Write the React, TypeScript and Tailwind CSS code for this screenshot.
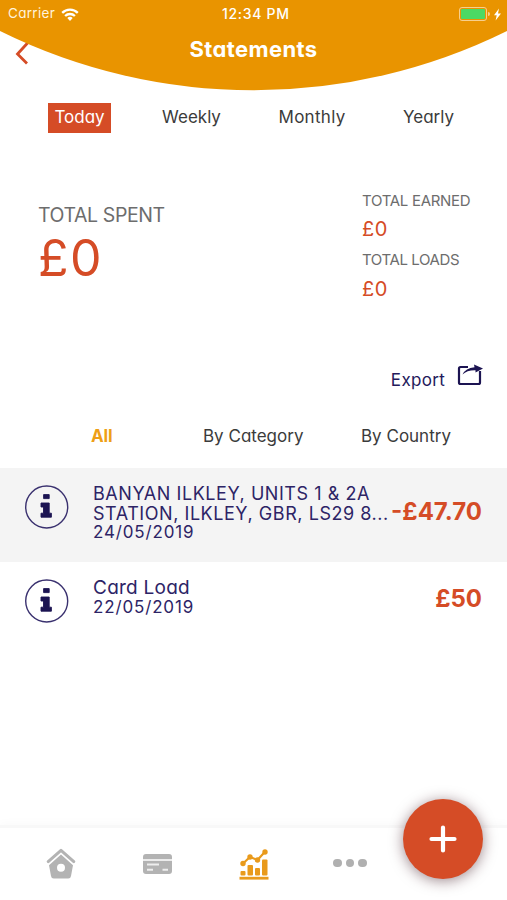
import React, { useState } from "react";
import clsx from "clsx";

const periods = [
  { label: "Today", text: "w-[63px]" },
  { label: "Weekly", text: "w-[71px]" },
  { label: "Monthly", text: "w-[80px] tracking-[0.3px]" },
  { label: "Yearly", text: "w-[63px]" },
];

const transactions = [
  {
    title: ["BANYAN ILKLEY, UNITS 1 & 2A", "STATION, ILKLEY, GBR, LS29 8..."],
    date: "24/05/2019",
    amount: "-£47.70",
  },
  { title: ["Card Load"], date: "22/05/2019", amount: "£50" },
];

function StatusBar() {
  return (
    <div className="relative flex h-[28px] items-center justify-between pl-[8px] pr-[5px] text-[13px] leading-none text-white">
      <div className="flex items-center gap-[6px]">
        <span className="w-[47px] text-[13.5px] tracking-[0.3px] text-[#fff3dc]">Carrier</span>
        <svg width="18" height="13" viewBox="0 0 18 13" fill="none" stroke="#fff" strokeWidth="2.3">
          <path d="M1.2 4.9a11 11 0 0 1 15.6 0" />
          <path d="M4.1 8a7 7 0 0 1 9.8 0" />
          <path d="M9 13 6.3 10.1a3.9 3.9 0 0 1 5.4 0z" fill="#fff" stroke="none" />
        </svg>
      </div>
      <span className="absolute left-[222px] text-[14px] font-medium tracking-[0.7px]">12:34 PM</span>
      <div className="flex items-center">
        <div className="h-[14px] w-[28px] rounded-[3px] border border-[#f7cf8e] p-px">
          <div className="h-full rounded-[1px] bg-[#4cd964]" />
        </div>
        <div className="ml-px h-[4px] w-[2px] rounded-r bg-[#f7cf8e]" />
        <svg className="ml-[3px]" width="9" height="13" viewBox="0 0 9 13" fill="#fff">
          <path d="M6 0.5 1 7.3h2.7L2.6 12.5 8 5.5H5z" />
        </svg>
      </div>
    </div>
  );
}

function Header() {
  return (
    <header className="relative h-[90px]">
      <svg className="absolute inset-0" width="507" height="91" viewBox="0 0 507 91">
        <path d="M28.5 42 17.5 54l9.5 9.5" fill="none" stroke="#d54c26" strokeWidth="2.8" />
        <path d="M0 0h507v31A572 572 0 0 1 0 31z" fill="#e99400" />
      </svg>
      <StatusBar />
      <h1 className="relative mt-[7px] text-center text-[22px] font-bold leading-[28px] tracking-[0.4px] text-white">
        Statements
      </h1>
    </header>
  );
}

function InfoIcon() {
  return (
    <svg className="shrink-0" width="44" height="44" viewBox="0 0 44 44">
      <circle cx="21.7" cy="22" r="21" fill="none" stroke="#3a316f" strokeWidth="1.4" />
      <path
        d="M18.6 9.6h5.6v4h-5.6zM16 18h8.2v10.2h2.2v4H16v-4h2.5v-6.2H16z"
        fill="#1c1452"
        stroke="#1c1452"
        strokeWidth="0.9"
        strokeLinejoin="round"
      />
    </svg>
  );
}

function TabBar() {
  return (
    <nav className="relative mt-auto flex h-[75px] items-center border-t-[3px] border-[#f8f8f8] bg-white shadow-[0_-3px_8px_rgba(0,0,0,0.02)]">
      <svg className="ml-[46px]" width="30" height="32" viewBox="0 0 30 32" fill="#b3b3b3">
        <path d="M2.2 13.6 15 2.3l12.8 11.3" fill="none" stroke="#b3b3b3" strokeWidth="3" strokeLinecap="round" strokeLinejoin="round" />
        <path
          fillRule="evenodd"
          d="M15 6.6 27 17.2l-2 10.8q-.4 2.5-2.7 2.5H7.7q-2.3 0-2.7-2.5L3 17.2zM15 15.7a4 4 0 1 0 0 8 4 4 0 0 0 0-8z"
        />
      </svg>
      <svg className="ml-[67px]" width="29" height="20" viewBox="0 0 29 20">
        <path d="M3 0h23q3 0 3 3v2.2H0V3q0-3 3-3zM0 6.8h29V17q0 3-3 3H3q-3 0-3-3z" fill="#b3b3b3" />
        <path d="M4 10.5h12M4 15.8h6M19.5 15.8H25" stroke="#eee" strokeWidth="2" />
      </svg>
      <svg className="ml-[67px]" width="30" height="31" viewBox="0 0 30 31" fill="#e99a1b">
        <path d="M4 14.5 11 8l7.5 3L26 2.8" fill="none" stroke="#e99a1b" strokeWidth="2.2" />
        <circle cx="4" cy="14.5" r="2.7" />
        <circle cx="11" cy="8" r="2.7" />
        <circle cx="18.5" cy="11" r="2.7" />
        <circle cx="26" cy="3" r="2.7" />
        <rect x="1.5" y="22" width="5" height="4.5" rx="1" />
        <rect x="8.5" y="16" width="5.5" height="10.5" rx="1" />
        <rect x="16" y="19" width="5" height="7.5" rx="1" />
        <rect x="23" y="10.5" width="5.5" height="16" rx="1" />
        <rect x="0.5" y="27.8" width="29" height="2.8" />
      </svg>
      <div className="ml-[64px] mt-[-2px] flex gap-[4px]">
        <span className="size-[8.5px] rounded-full bg-[#b0b0b0]" />
        <span className="size-[8.5px] rounded-full bg-[#b0b0b0]" />
        <span className="size-[8.5px] rounded-full bg-[#b0b0b0]" />
      </div>
      <button className="absolute right-[24px] top-[-29px] flex size-[80px] items-center justify-center rounded-full bg-[#d54c26] shadow-[0_2px_14px_rgba(60,20,30,0.5)]">
        <svg width="30" height="30" viewBox="0 0 30 30" stroke="#fff" strokeWidth="4.2" strokeLinecap="round">
          <path d="M15 3.5v23M3.5 15h23" />
        </svg>
      </button>
    </nav>
  );
}

export default function App() {
  const [period, setPeriod] = useState("Today");

  return (
    <div className="flex h-[900px] w-[507px] flex-col overflow-hidden bg-white font-[Inter,sans-serif] text-[#3b3b3b] [font-feature-settings:'cv11']">
      <Header />
      <div className="mt-[13px] flex h-[30px] justify-between pl-[48px] pr-[47px]">
        {periods.map((p) => (
          <button
            key={p.label}
            onClick={() => setPeriod(p.label)}
            className={clsx(
              "whitespace-nowrap pb-[2px] text-center text-[17px] leading-[28px]",
              p.text,
              period === p.label && "bg-[#d54c26] text-white"
            )}
          >
            {p.label}
          </button>
        ))}
      </div>

      <div className="mt-[55px] flex h-[142px] justify-between whitespace-nowrap pl-[38px]">
        <div className="pt-[13px]">
          <p className="text-[19.5px] leading-[28px] tracking-[-0.4px] text-[#6d6d6d]">TOTAL SPENT</p>
          <p className="mt-[2px] text-[50px] leading-[54px] tracking-[1.5px] text-[#d54c26]">£0</p>
        </div>
        <div className="w-[145px]">
          <p className="text-[15px] leading-[25px] tracking-[-0.3px] text-[#6d6d6d]">TOTAL EARNED</p>
          <p className="text-[20px] leading-[33px] tracking-[0.5px] text-[#d54c26]">£0</p>
          <p className="mt-px text-[15px] leading-[25px] tracking-[-0.4px] text-[#6d6d6d]">TOTAL LOADS</p>
          <p className="text-[20px] leading-[34px] tracking-[0.5px] text-[#d54c26]">£0</p>
        </div>
      </div>

      <div className="mt-[30px] flex h-[40px] items-center justify-end pr-[24px] text-[#241a5c]">
        <span className="text-[17px] leading-[40px] tracking-[0.3px]">Export</span>
        <svg className="mb-[10px] ml-[12px]" width="26" height="22" viewBox="0 0 26 22" fill="none" stroke="#1c1452" strokeWidth="2.2">
          <path d="M11 3H3.5Q2 3 2 4.5v14Q2 20 3.5 20h18q1.5 0 1.5-1.5V7" />
          <path d="M5.5 10.5Q8.5 4 17.5 3.2L17 0.5 26 4.500 18.500 8.500V6.200Q10 6 5.500 10.500z" fill="#1c1452" stroke="none" />
        </svg>
      </div>

      <div className="mt-[16px] flex h-[52px] whitespace-nowrap text-[17px] leading-[40px]">
        <span className="ml-[91px] w-[112px] font-bold tracking-[-0.2px] text-[#ee9f16]">All</span>
        <span className="w-[158px]">By Category</span>
        <span>By Country</span>
      </div>

      {transactions.map((t, i) => (
        <div
          key={t.date}
          className={clsx("flex h-[94px] whitespace-nowrap pl-[25px] pr-[25px] pt-[17px] text-[#2d2466]", i % 2 === 0 && "bg-[#f4f4f4]")}
        >
          <InfoIcon />
          <div className="ml-[24px] mt-[-1px] w-[297px] shrink-0 text-[18px] leading-[19.5px] tracking-[0.55px]">
            {t.title.map((line) => (
              <p key={line} className={clsx(t.title.length === 1 && "text-[19px] tracking-[0.25px]")}>
                {line}
              </p>
            ))}
            <p className="text-[17px] leading-[18.5px] tracking-[0.85px]">{t.date}</p>
          </div>
          <div
            className={clsx(
              "flex flex-1 justify-end text-[24px] font-bold leading-[28px] text-[#d54c26]",
              t.title.length > 1 ? "pt-[13px]" : "pt-[6px]"
            )}
          >
            {t.amount}
          </div>
        </div>
      ))}

      <TabBar />
    </div>
  );
}
